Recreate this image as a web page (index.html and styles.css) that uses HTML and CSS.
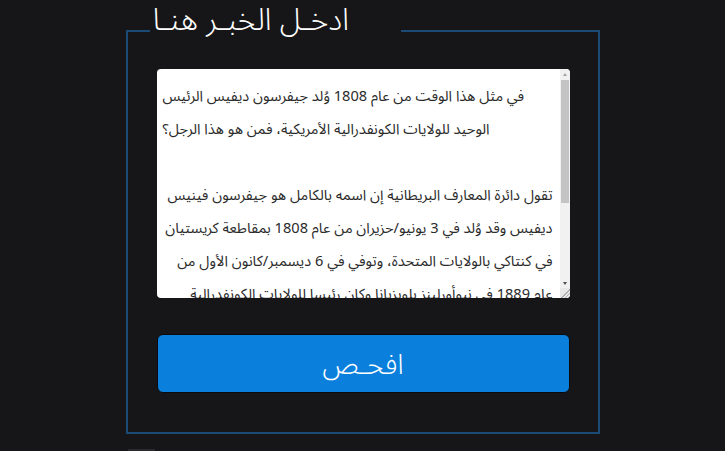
FILE: index.html
```html
<!DOCTYPE html>
<html lang="ar">
<head>
<meta charset="utf-8">
<title>ادخل الخبر هنا</title>
<link rel="stylesheet" href="styles.css">
</head>
<body>
<main class="page">
  <form class="news-form">
    <fieldset class="box">
      <legend class="box-title">ادخـل الخبـر هنـا</legend>
      <div class="news-input">
        <div class="news-text">
          <p class="para para-first">في مثل هذا الوقت من عام 1808 وُلد جيفرسون ديفيس الرئيس الوحيد للولايات الكونفدرالية الأمريكية، فمن هو هذا الرجل؟</p>
          <p class="para">&nbsp;</p>
          <p class="para">تقول دائرة المعارف البريطانية إن اسمه بالكامل هو جيفرسون فينيس ديفيس وقد وُلد في 3 يونيو/حزيران من عام 1808 بمقاطعة كريستيان في كنتاكي بالولايات المتحدة، وتوفي في 6 ديسمبر/كانون الأول من عام 1889 في نيوأورلينز بلويزيانا وكان رئيسا للولايات الكونفدرالية</p>
        </div>
        <div class="scrollbar" aria-hidden="true">
          <span class="sb-btn"><i class="arrow arrow-up"></i></span>
          <span class="sb-track"><span class="sb-thumb"></span></span>
          <span class="sb-btn"><i class="arrow arrow-down"></i></span>
          <span class="sb-corner"></span>
        </div>
      </div>
      <button type="button" class="check-btn">افحـص</button>
    </fieldset>
  </form>
  <div class="next-block"></div>
</main>
</body>
</html>
```

FILE: styles.css
```css
html, body {
  margin: 0;
  padding: 0;
  background: #161618;
  height: 100%;
  overflow: hidden;
}

body {
  font-family: "Noto Sans Arabic", "DejaVu Sans", sans-serif;
  color: #fff;
}

.page {
  display: flex;
  flex-direction: column;
  align-items: center;
  padding-top: 1px;
}

.news-form {
  width: 474px;
}

.box {
  margin: 0;
  border: 2px solid #1c4a76;
  padding: 8px 28px 39px 29px;
  display: flex;
  flex-direction: column;
  gap: 36px;
}

.box-title {
  margin-left: -7px;
  padding: 0 52px 22px 3px;
  font-size: 31px;
  font-weight: 300;
  line-height: 38px;
  color: #fff;
  direction: rtl;
}

.news-input {
  height: 229px;
  display: flex;
  background: #fff;
  border-radius: 4px;
  overflow: hidden;
}

.news-text {
  flex: 1;
  overflow: hidden;
  padding: 11px 0 0 6px;
  color: #2b2b2b;
  font-size: 14.6px;
  line-height: 33px;
}

.para {
  margin: 0;
  padding-right: 7px;
  direction: rtl;
  text-align: right;
}

.para-first {
  direction: ltr;
  text-align: left;
}

.scrollbar {
  width: 10px;
  display: flex;
  flex-direction: column;
  background: #f1f1f1;
}

.sb-btn {
  height: 10px;
  display: flex;
  align-items: center;
  justify-content: center;
}

.arrow {
  width: 0;
  height: 0;
  border-left: 2.5px solid transparent;
  border-right: 2.5px solid transparent;
}

.arrow-up {
  border-bottom: 3px solid #a3a3a3;
}

.arrow-down {
  border-top: 3px solid #505050;
}

.sb-track {
  flex: 1;
  padding: 1px 1px 0;
}

.sb-thumb {
  display: block;
  height: 123px;
  background: #c4c4c4;
}

.sb-corner {
  height: 10px;
  background:
    linear-gradient(135deg, transparent 0 55%, #b0b0b0 55% 62%, transparent 62% 72%, #b0b0b0 72% 79%, transparent 79%),
    #e8e8e8;
}

.check-btn {
  height: 59px;
  border: 1px solid #0a0a0c;
  border-radius: 6px;
  background: #0b7fdc;
  color: #fff;
  font-family: inherit;
  font-size: 28px;
  font-weight: 300;
  cursor: pointer;
}

.next-block {
  align-self: flex-start;
  margin-left: 128px;
  margin-top: 15px;
  width: 27px;
  height: 4px;
  background: #2a2a2d;
}
```
